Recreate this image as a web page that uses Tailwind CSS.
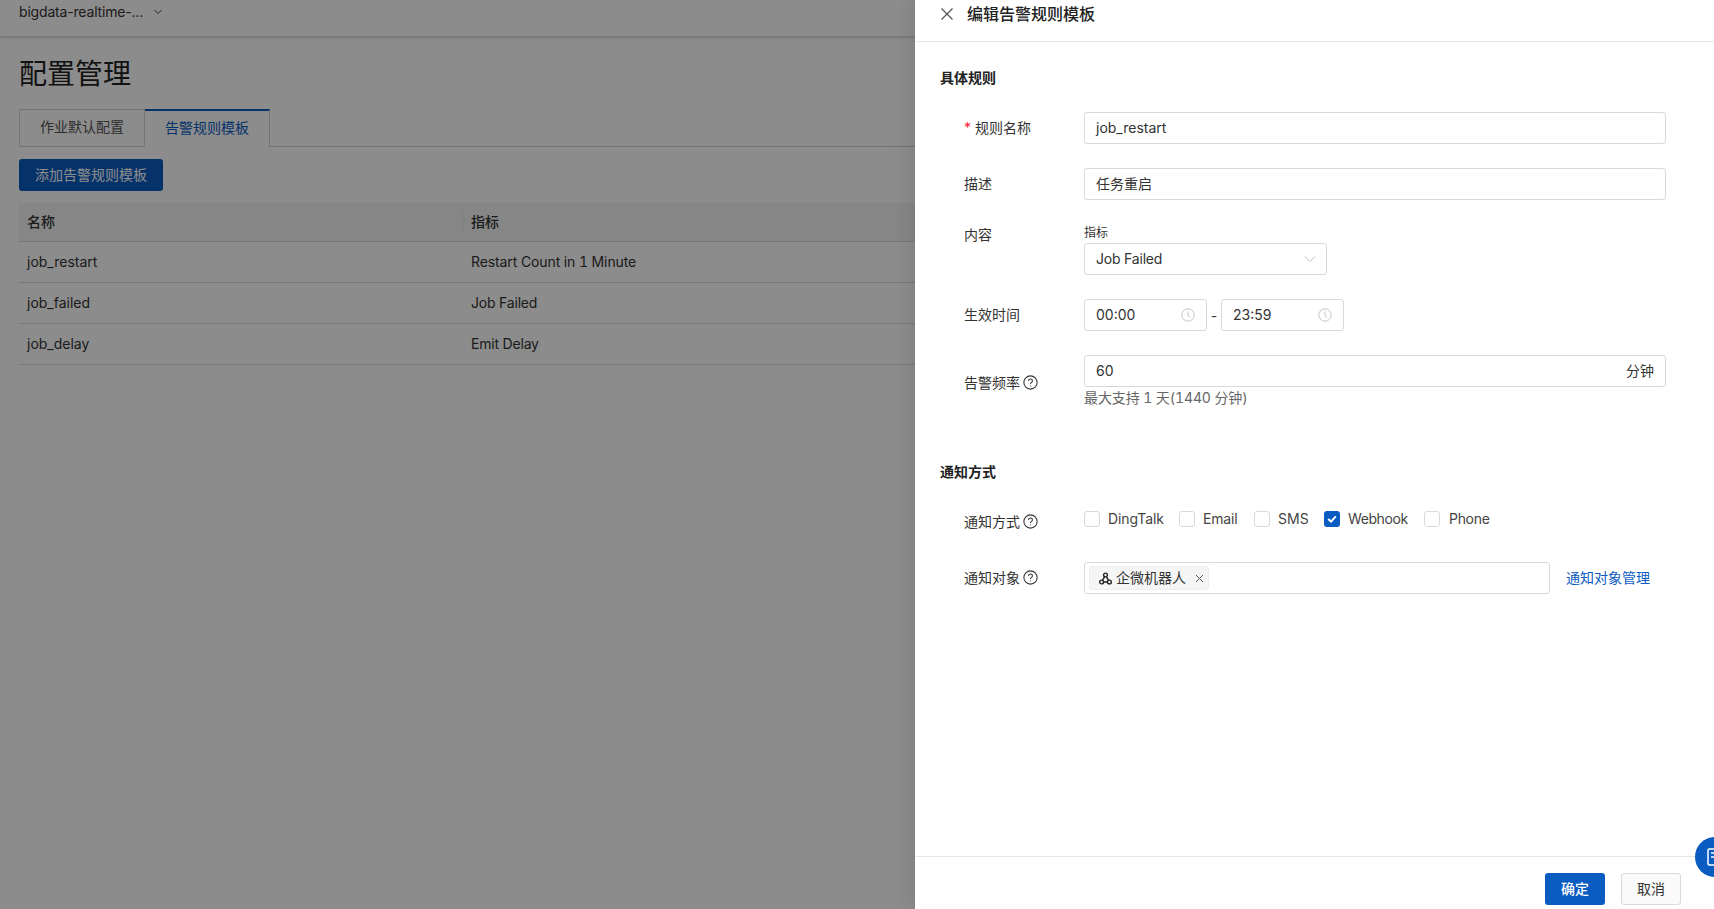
<!DOCTYPE html>
<html lang="zh">
<head>
  <meta charset="UTF-8">
  <title>配置管理</title>
  <script src="https://cdn.jsdelivr.net/npm/@tailwindcss/browser@4"></script>
</head>
<body class="font-['Inter','Noto_Sans_CJK_SC',sans-serif] text-[14px] text-[#333]">
<div class="relative w-[1714px] h-[909px] overflow-hidden bg-white">

  <!-- Page -->
  <div class="h-[37px] border-b border-[#d9d9d9] shadow-sm px-[19px] flex items-start">
    <div class="h-[24px] flex items-center gap-[10px]">
      <span class="leading-[24px] tracking-[-0.18px]">bigdata-realtime-...</span>
      <svg class="w-[10px] h-[10px] text-[#444]" viewBox="0 0 10 10" fill="none" stroke="currentColor" stroke-width="1"><path d="M1.5 3 5 6.5 8.5 3"/></svg>
    </div>
  </div>
  <div class="px-[19px]">
    <h1 class="mt-[17px] text-[28px] leading-[40px] font-normal text-[#222]">配置管理</h1>
    <div class="mt-[15px] flex h-[38px] border-b border-[#d4d4d4]">
      <div class="w-[126px] h-[38px] border border-[#d4d4d4] pb-[3px] flex items-center justify-center text-[#555]">作业默认配置</div>
      <div class="w-[125px] h-[38px] border-r border-[#d4d4d4] border-t-2 border-t-[#0b5cc1] bg-white pb-[4px] flex items-center justify-center text-[#0b5cc1]">告警规则模板</div>
    </div>
    <button class="mt-[12px] w-[144px] h-[32px] rounded-[3px] bg-[#0b5cc1] text-white pb-[2px] flex items-center justify-center">添加告警规则模板</button>
    <table class="mt-[12px] w-full table-fixed">
      <thead>
        <tr class="h-[38px] bg-[#f5f5f5] border-b border-[#d9d9d9] text-left">
          <th class="w-[444px] pl-[8px] font-medium relative">名称<span class="absolute right-0 top-[8px] h-[22px] w-px bg-[#e5e5e5]"></span></th>
          <th class="pl-[8px] font-medium">指标</th>
        </tr>
      </thead>
      <tbody>
        <tr class="h-[41px] border-b border-[#d9d9d9]"><td class="pl-[8px]">job_restart</td><td class="pl-[8px] tabular-nums tracking-[-0.1px]">Restart Count in 1 Minute</td></tr>
        <tr class="h-[41px] border-b border-[#d9d9d9]"><td class="pl-[8px]">job_failed</td><td class="pl-[8px] tracking-[-0.2px]">Job Failed</td></tr>
        <tr class="h-[41px] border-b border-[#d9d9d9]"><td class="pl-[8px]">job_delay</td><td class="pl-[8px] tracking-[-0.2px]">Emit Delay</td></tr>
      </tbody>
    </table>
  </div>

  <!-- Mask -->
  <div class="absolute inset-0 bg-black/45"></div>

  <!-- Drawer -->
  <div class="absolute top-0 right-0 bottom-0 w-[799px] bg-white flex flex-col shadow-[-6px_0_16px_rgba(0,0,0,0.08)]">
    <div class="h-[42px] shrink-0 border-b border-[#e8e8e8] pl-[25px] flex items-start">
      <div class="h-[28px] flex items-center gap-[13px]">
        <svg class="w-[14px] h-[14px] text-[#555]" viewBox="0 0 14 14" fill="none" stroke="currentColor" stroke-width="1.2"><path d="M1.5 1.5 12.5 12.5M12.5 1.5 1.5 12.5"/></svg>
        <span class="text-[16px] font-medium text-[#222] leading-[28px]">编辑告警规则模板</span>
      </div>
    </div>

    <div class="flex-1 pl-[25px] pr-[48px]">
      <h2 class="mt-[26px] font-semibold leading-[20px] text-[#222]">具体规则</h2>

      <div class="mt-[24px] pl-[24px] flex items-center h-[32px]">
        <label class="w-[120px] shrink-0 pb-[2px]"><span class="text-[#f5222d] mr-[4px]">*</span>规则名称</label>
        <div class="flex-1 h-[32px] border border-[#d9d9d9] rounded-[3px] px-[11px] pb-[2px] flex items-center">job_restart</div>
      </div>

      <div class="mt-[24px] pl-[24px] flex items-center h-[32px]">
        <label class="w-[120px] shrink-0 pb-[2px]">描述</label>
        <div class="flex-1 h-[32px] border border-[#d9d9d9] rounded-[3px] px-[11px] pb-[2px] flex items-center">任务重启</div>
      </div>

      <div class="mt-[24px] pl-[24px] flex items-start">
        <label class="w-[120px] shrink-0 leading-[22px]">内容</label>
        <div>
          <div class="text-[12px] leading-[19px] pb-[1px] -mt-[1px]">指标</div>
          <div class="w-[243px] h-[32px] border border-[#d9d9d9] rounded-[3px] pl-[11px] pr-[10px] flex items-center justify-between">
            <span class="pb-[2px] tracking-[-0.2px]">Job Failed</span>
            <svg class="w-[12px] h-[12px] text-[#bbb]" viewBox="0 0 12 12" fill="none" stroke="currentColor" stroke-width="1"><path d="M1 3.5 6 8.5 11 3.5"/></svg>
          </div>
        </div>
      </div>

      <div class="mt-[24px] pl-[24px] flex items-center h-[32px]">
        <label class="w-[120px] shrink-0 pb-[2px]">生效时间</label>
        <div class="w-[123px] h-[32px] border border-[#d9d9d9] rounded-[3px] px-[11px] flex items-center justify-between">
          <span class="pb-[2px]">00:00</span>
          <svg class="w-[14px] h-[14px] text-[#c4c4c4]" viewBox="0 0 14 14" fill="none" stroke="currentColor" stroke-width="1"><circle cx="7" cy="7" r="6.2"/><path d="M7 3.5V7.5L9.2 9.5"/></svg>
        </div>
        <span class="w-[14px] text-center">-</span>
        <div class="w-[123px] h-[32px] border border-[#d9d9d9] rounded-[3px] px-[11px] flex items-center justify-between">
          <span class="pb-[2px]">23:59</span>
          <svg class="w-[14px] h-[14px] text-[#c4c4c4]" viewBox="0 0 14 14" fill="none" stroke="currentColor" stroke-width="1"><circle cx="7" cy="7" r="6.2"/><path d="M7 3.5V7.5L9.2 9.5"/></svg>
        </div>
      </div>

      <div class="mt-[24px] pl-[24px] flex items-center">
        <label class="w-[120px] shrink-0 flex items-center gap-[3px]">告警频率
          <svg class="w-[15px] h-[15px] text-[#333]" viewBox="0 0 14 14" fill="none" stroke="currentColor" stroke-width="1"><circle cx="7" cy="7" r="6.2"/><path d="M5.2 5.5C5.2 3.2 8.8 3.2 8.8 5.5 8.8 7 7 6.8 7 8.4M7 9.7V10.6"/></svg>
        </label>
        <div class="flex-1">
          <div class="h-[32px] border border-[#d9d9d9] rounded-[3px] pl-[11px] pr-[11px] flex items-center justify-between"><span class="pb-[2px]">60</span><span class="pb-[2px]">分钟</span></div>
          <div class="leading-[22px] text-[#666] tabular-nums tracking-[-0.12px]">最大支持 1 天(1440 分钟)</div>
        </div>
      </div>

      <h2 class="mt-[53px] font-semibold leading-[20px] text-[#222]">通知方式</h2>

      <div class="mt-[24px] pl-[24px] flex items-center h-[32px]">
        <label class="w-[120px] shrink-0 flex items-center gap-[3px] pb-[2px]">通知方式
          <svg class="w-[15px] h-[15px] text-[#333]" viewBox="0 0 14 14" fill="none" stroke="currentColor" stroke-width="1"><circle cx="7" cy="7" r="6.2"/><path d="M5.2 5.5C5.2 3.2 8.8 3.2 8.8 5.5 8.8 7 7 6.8 7 8.4M7 9.7V10.6"/></svg>
        </label>
        <div class="flex items-center -mt-[6px] text-[#444]">
          <div class="w-[95px] flex items-center gap-[8px]"><span class="w-[16px] h-[16px] rounded-[3px] border border-[#d9d9d9]"></span><span class="pb-[2px] tracking-[-0.1px]">DingTalk</span></div>
          <div class="w-[75px] flex items-center gap-[8px]"><span class="w-[16px] h-[16px] rounded-[3px] border border-[#d9d9d9]"></span><span class="pb-[2px] tracking-[-0.2px]">Email</span></div>
          <div class="w-[70px] flex items-center gap-[8px]"><span class="w-[16px] h-[16px] rounded-[3px] border border-[#d9d9d9]"></span><span class="pb-[2px]">SMS</span></div>
          <div class="w-[100px] flex items-center gap-[8px]">
            <span class="w-[16px] h-[16px] rounded-[3px] bg-[#0b5cc1] flex items-center justify-center">
              <svg class="w-[12px] h-[12px] text-white" viewBox="0 0 12 12" fill="none" stroke="currentColor" stroke-width="2"><path d="M2.2 6 5 8.6 9.8 3.4"/></svg>
            </span><span class="pb-[2px] tracking-[-0.4px]">Webhook</span>
          </div>
          <div class="flex items-center gap-[9px]"><span class="w-[16px] h-[16px] rounded-[3px] border border-[#d9d9d9]"></span><span class="pb-[2px] tracking-[-0.3px]">Phone</span></div>
        </div>
      </div>

      <div class="mt-[24px] pl-[24px] flex items-center h-[32px]">
        <label class="w-[120px] shrink-0 flex items-center gap-[3px] pb-[2px]">通知对象
          <svg class="w-[15px] h-[15px] text-[#333]" viewBox="0 0 14 14" fill="none" stroke="currentColor" stroke-width="1"><circle cx="7" cy="7" r="6.2"/><path d="M5.2 5.5C5.2 3.2 8.8 3.2 8.8 5.5 8.8 7 7 6.8 7 8.4M7 9.7V10.6"/></svg>
        </label>
        <div class="w-[466px] h-[32px] border border-[#d9d9d9] rounded-[3px] pl-[4px] flex items-center">
          <div class="w-[120px] h-[24px] rounded-[3px] border border-[#eeeeee] bg-[#f5f5f5] flex items-center pl-[9px]">
            <svg class="w-[13px] h-[13px] text-[#222]" viewBox="0 0 13 13" fill="none" stroke="currentColor" stroke-width="1.4"><circle cx="6.5" cy="3" r="1.9"/><circle cx="2.6" cy="10" r="1.9"/><circle cx="10.4" cy="10" r="1.9"/><path d="M5.6 4.7 3.5 8.3M7.4 4.7 9.5 8.3M4.5 10H8.5"/></svg>
            <span class="ml-[4px] pb-[2px]">企微机器人</span>
            <svg class="ml-[9px] w-[9px] h-[9px] text-[#555]" viewBox="0 0 9 9" fill="none" stroke="currentColor" stroke-width="1"><path d="M1 1 8 8M8 1 1 8"/></svg>
          </div>
        </div>
        <a class="ml-[16px] pb-[2px] text-[#0b5cc1]">通知对象管理</a>
      </div>
    </div>

    <div class="h-[53px] shrink-0 border-t border-[#e8e8e8] pt-[16px] pr-[33px] flex justify-end items-start gap-[16px]">
      <button class="w-[60px] h-[32px] rounded-[3px] bg-[#0b5cc1] text-white font-medium pb-[2px]">确定</button>
      <button class="w-[60px] h-[32px] rounded-[3px] border border-[#d9d9d9] bg-[#fafafa] text-[#333] pb-[2px]">取消</button>
    </div>
  </div>

  <!-- Floating help button -->
  <div class="absolute left-[1695px] top-[837px] w-[40px] h-[40px] rounded-full bg-[#0b5cc1] flex items-center pl-[12px]">
    <svg class="w-[16px] h-[18px] text-white" viewBox="0 0 16 18" fill="none" stroke="currentColor" stroke-width="1.5"><rect x="1" y="1" width="14" height="16" rx="1.5"/><path d="M4 5H12M4 9H12"/></svg>
  </div>
</div>
</body>
</html>
